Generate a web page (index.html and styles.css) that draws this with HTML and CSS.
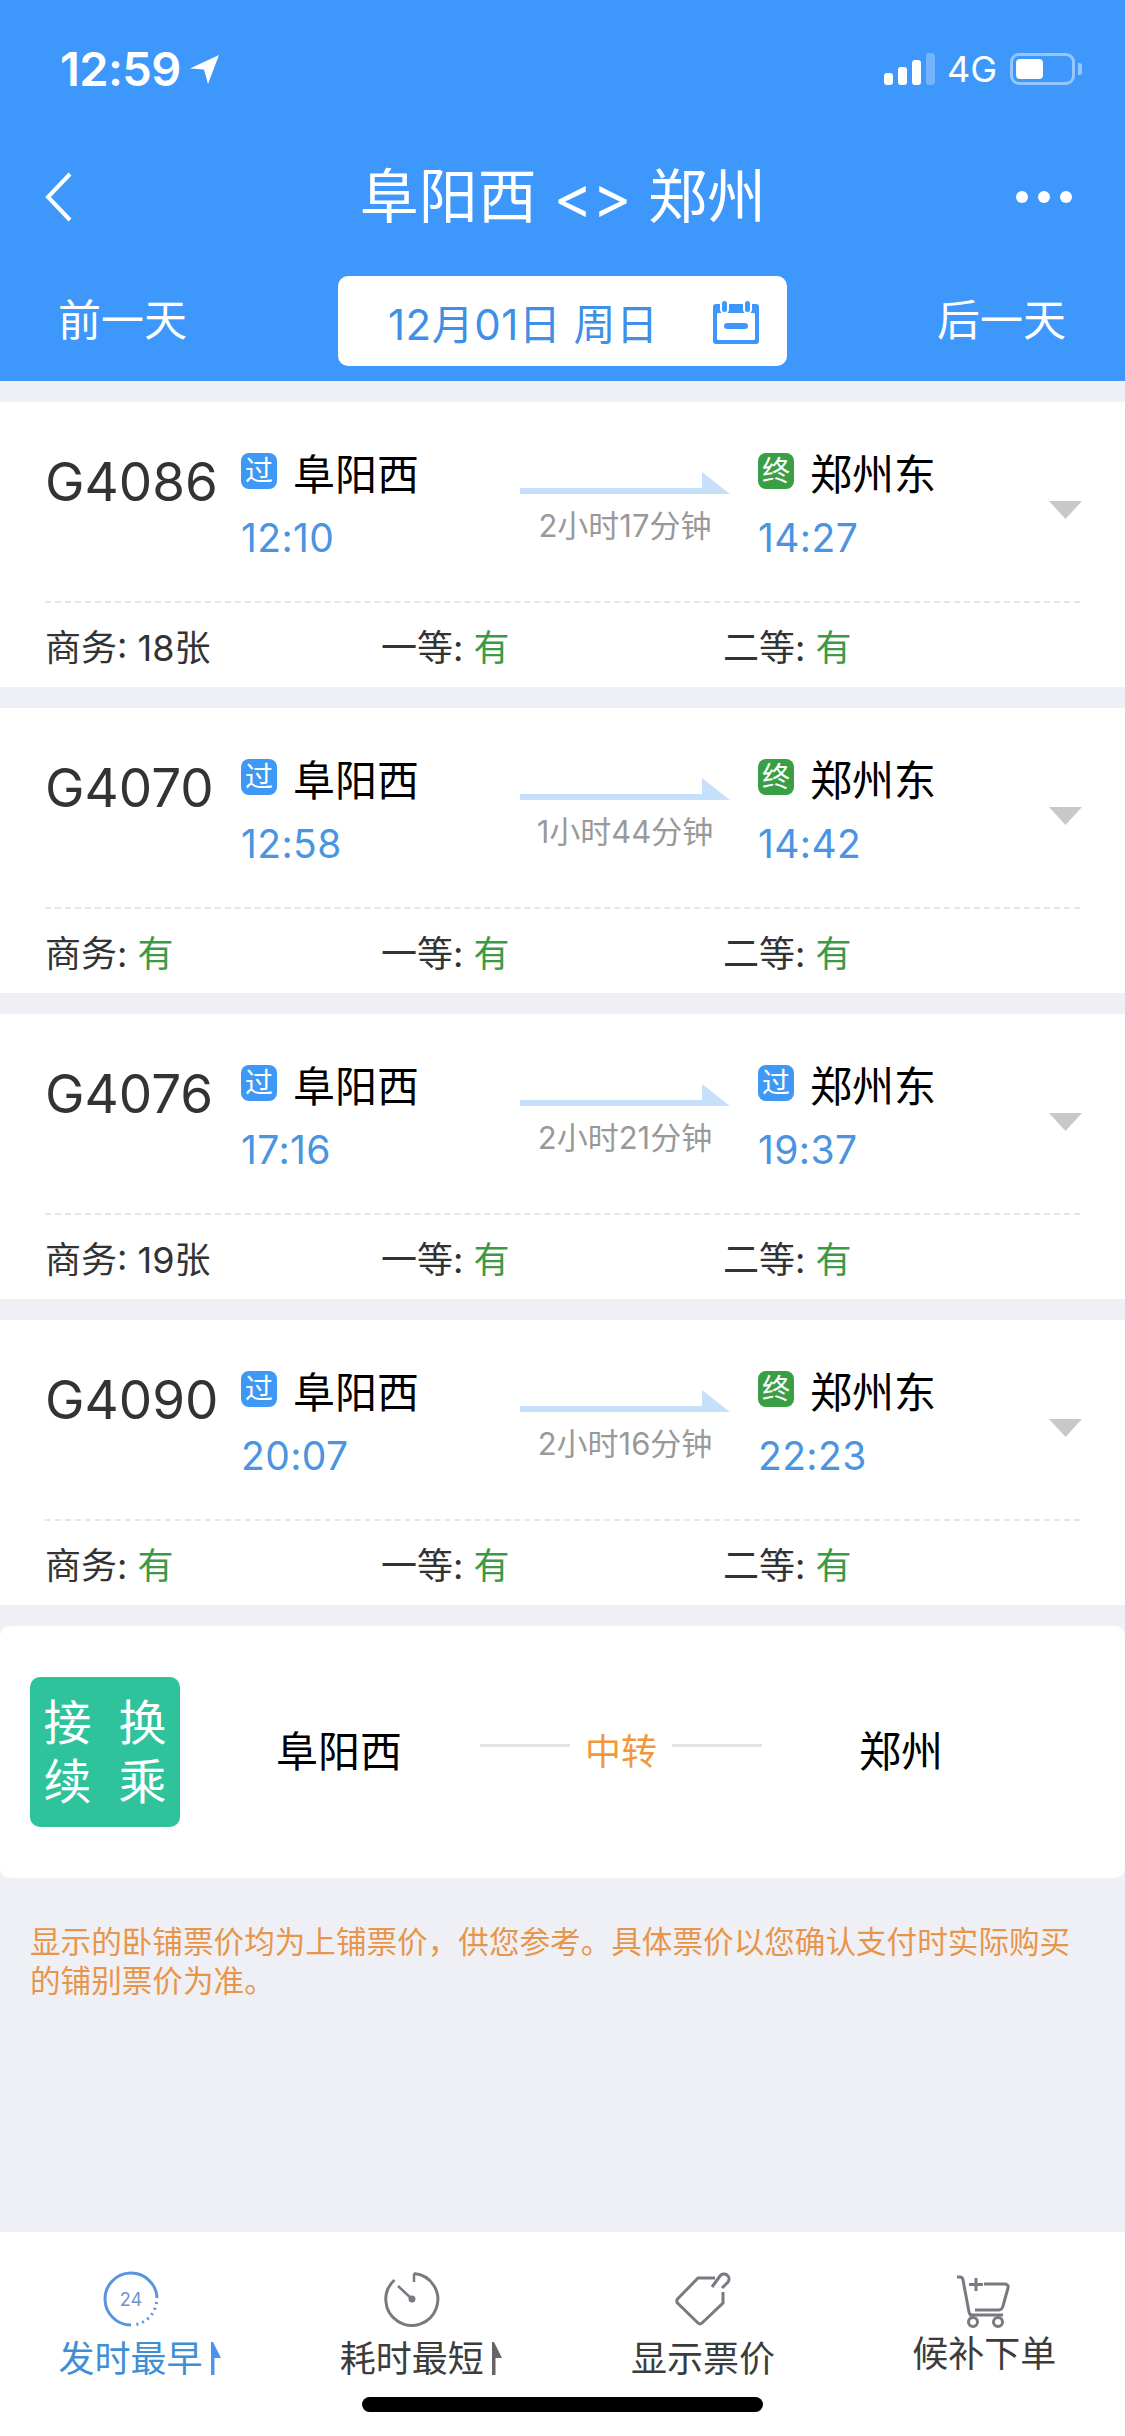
FILE: index.html
```html
<!DOCTYPE html>
<html lang="zh-CN">
<head>
<meta charset="utf-8">
<title>阜阳西 - 郑州</title>
<link rel="stylesheet" href="styles.css">
</head>
<body>
<div class="app">
  <header class="header">
    <div class="status">
      <div class="status-left">
        <span class="clock">12:59</span>
        <svg class="loc" viewBox="0 0 30 29"><path d="M29 0 0 13.500 14 14.500 18 29Z"/></svg>
      </div>
      <div class="status-right">
        <div class="signal"><i class="b1"></i><i class="b2"></i><i class="b3"></i><i class="b4"></i></div>
        <span class="net">4G</span>
        <div class="battery"><div class="battery-fill"></div></div>
        <div class="battery-nub"></div>
      </div>
    </div>
    <nav class="nav">
      <svg class="back" viewBox="0 0 30 52"><path d="M26 3 4 26l22 23"/></svg>
      <h1 class="title">阜阳西 &lt;&gt; 郑州</h1>
      <div class="dots"><i></i><i></i><i></i></div>
    </nav>
    <div class="dates">
      <span class="day-btn">前一天</span>
      <div class="date-pill">
        <span class="date-text">12月01日 周日</span>
        <svg class="cal" viewBox="0 0 46 45"><path class="cal-body" d="M3 5h40a3 3 0 0 1 3 3v34a3 3 0 0 1-3 3H3a3 3 0 0 1-3-3V8a3 3 0 0 1 3-3Z"/><rect class="cal-in" x="4" y="14" width="38" height="27" rx="1"/><rect class="cal-body" x="11" y="24" width="24" height="6" rx="3"/><rect class="cal-ring" x="8" y="1" width="7" height="13" rx="3.500"/><rect class="cal-ring" x="31" y="1" width="7" height="13" rx="3.500"/></svg>
      </div>
      <span class="day-btn">后一天</span>
    </div>
  </header>

  <main class="list">
    <section class="card">
      <div class="trip">
        <div class="train">G4086</div>
        <div class="stop stop-from">
          <div class="stop-name"><span class="tag tag-pass">过</span>阜阳西</div>
          <div class="time">12:10</div>
        </div>
        <div class="span">
          <svg class="arrow" viewBox="0 0 210 22"><path d="M0 16h182V0l28 22H0Z"/></svg>
          <div class="dur">2小时17分钟</div>
        </div>
        <div class="stop stop-to">
          <div class="stop-name"><span class="tag tag-end">终</span>郑州东</div>
          <div class="time">14:27</div>
        </div>
        <svg class="chev" viewBox="0 0 33 18"><path d="M0 0h33L16.500 18Z"/></svg>
      </div>
      <div class="seats">
        <div class="seat seat-a">商务: 18张</div>
        <div class="seat seat-b">一等: <em>有</em></div>
        <div class="seat seat-c">二等: <em>有</em></div>
      </div>
    </section>

    <section class="card">
      <div class="trip">
        <div class="train">G4070</div>
        <div class="stop stop-from">
          <div class="stop-name"><span class="tag tag-pass">过</span>阜阳西</div>
          <div class="time">12:58</div>
        </div>
        <div class="span">
          <svg class="arrow" viewBox="0 0 210 22"><path d="M0 16h182V0l28 22H0Z"/></svg>
          <div class="dur">1小时44分钟</div>
        </div>
        <div class="stop stop-to">
          <div class="stop-name"><span class="tag tag-end">终</span>郑州东</div>
          <div class="time">14:42</div>
        </div>
        <svg class="chev" viewBox="0 0 33 18"><path d="M0 0h33L16.500 18Z"/></svg>
      </div>
      <div class="seats">
        <div class="seat seat-a">商务: <em>有</em></div>
        <div class="seat seat-b">一等: <em>有</em></div>
        <div class="seat seat-c">二等: <em>有</em></div>
      </div>
    </section>

    <section class="card">
      <div class="trip">
        <div class="train">G4076</div>
        <div class="stop stop-from">
          <div class="stop-name"><span class="tag tag-pass">过</span>阜阳西</div>
          <div class="time">17:16</div>
        </div>
        <div class="span">
          <svg class="arrow" viewBox="0 0 210 22"><path d="M0 16h182V0l28 22H0Z"/></svg>
          <div class="dur">2小时21分钟</div>
        </div>
        <div class="stop stop-to">
          <div class="stop-name"><span class="tag tag-pass">过</span>郑州东</div>
          <div class="time">19:37</div>
        </div>
        <svg class="chev" viewBox="0 0 33 18"><path d="M0 0h33L16.500 18Z"/></svg>
      </div>
      <div class="seats">
        <div class="seat seat-a">商务: 19张</div>
        <div class="seat seat-b">一等: <em>有</em></div>
        <div class="seat seat-c">二等: <em>有</em></div>
      </div>
    </section>

    <section class="card">
      <div class="trip">
        <div class="train">G4090</div>
        <div class="stop stop-from">
          <div class="stop-name"><span class="tag tag-pass">过</span>阜阳西</div>
          <div class="time">20:07</div>
        </div>
        <div class="span">
          <svg class="arrow" viewBox="0 0 210 22"><path d="M0 16h182V0l28 22H0Z"/></svg>
          <div class="dur">2小时16分钟</div>
        </div>
        <div class="stop stop-to">
          <div class="stop-name"><span class="tag tag-end">终</span>郑州东</div>
          <div class="time">22:23</div>
        </div>
        <svg class="chev" viewBox="0 0 33 18"><path d="M0 0h33L16.500 18Z"/></svg>
      </div>
      <div class="seats">
        <div class="seat seat-a">商务: <em>有</em></div>
        <div class="seat seat-b">一等: <em>有</em></div>
        <div class="seat seat-c">二等: <em>有</em></div>
      </div>
    </section>

    <section class="transfer">
      <div class="badge"><span>接</span><span>换</span><span>续</span><span>乘</span></div>
      <div class="tr-from">阜阳西</div>
      <div class="tr-mid"><i></i><span>中转</span><i></i></div>
      <div class="tr-to">郑州</div>
    </section>

    <p class="note">显示的卧铺票价均为上铺票价，供您参考。具体票价以您确认支付时实际购买的铺别票价为准。</p>
  </main>

  <footer class="tabs">
    <div class="tab tab-sort tab-active">
      <svg class="tab-icon" viewBox="0 0 54 54"><path class="ic-blue" d="M53 26A26 26 0 1 0 27 53"/><path class="ic-dot" d="M52.500 30A26 26 0 0 1 31 52.800"/><text class="ic-num" x="27" y="33.500" text-anchor="middle">24</text></svg>
      <div class="tab-label">发时最早<svg class="sort" viewBox="0 0 10 33"><path d="M0 0h2l8 16H3.500v17H0Z"/></svg></div>
    </div>
    <div class="tab tab-sort">
      <svg class="tab-icon" viewBox="0 0 54 54"><path class="ic-grey" d="M29 1.500A26 26 0 1 1 9.500 8"/><path class="ic-grey ic-thin" d="M29 1.500V10M13 14l14 13"/><circle class="ic-fill" cx="27" cy="27" r="3.500"/></svg>
      <div class="tab-label">耗时最短<svg class="sort sort-grey" viewBox="0 0 10 33"><path d="M0 0h2l8 16H3.500v17H0Z"/></svg></div>
    </div>
    <div class="tab">
      <svg class="tab-icon" viewBox="0 0 54 54"><path class="ic-grey" d="M39 6H22L1.500 27q-1.500 2 0 4L22 51q2 2 4 0l21-20V20"/><path class="ic-grey" d="M36 15l8-11a5 5 0 0 1 8 6l-6 6"/></svg>
      <div class="tab-label">显示票价</div>
    </div>
    <div class="tab tab-cart">
      <svg class="tab-icon" viewBox="0 0 54 54"><path class="ic-grey" d="M0 2h3q2.500 0 3 3l6 32q.5 3 3 3"/><path class="ic-grey" d="M27 9h20q5 0 4 4l-5 18q-1 4-4 4H18"/><path class="ic-grey" d="M19 3v13M12 9.500h14M12 40h34"/><circle class="ic-grey" cx="16" cy="47" r="4.500"/><circle class="ic-grey" cx="41" cy="47" r="4.500"/></svg>
      <div class="tab-label">候补下单</div>
    </div>
    <div class="home"></div>
  </footer>
</div>
</body>
</html>
```
FILE: styles.css
```css
* { box-sizing: border-box; }
html, body { margin: 0; padding: 0; }
body {
  width: 1125px;
  height: 2436px;
  overflow: hidden;
  background: #eff0f6;
  font-family: "Inter", "Noto Sans CJK SC", sans-serif;
}
.app { display: flex; flex-direction: column; height: 2436px; }

/* Header */
.header { background: #3e98fb; height: 381px; flex: none; color: #fff; }
.status { height: 138px; padding: 53px 43px 0 60px; display: flex; justify-content: space-between; }
.status-left { display: flex; align-items: flex-start; }
.clock { font-size: 47px; line-height: 32px; font-weight: 600; letter-spacing: -.6px; width: 130px; }
.loc { width: 30px; height: 29px; margin-top: 2px; fill: #fff; }
.status-right { display: flex; align-items: flex-start; }
.signal { display: flex; align-items: flex-end; gap: 5px; height: 32px; width: 51px; }
.signal i { display: block; width: 9px; background: #fff; border-radius: 3px; }
.b1 { height: 12px; }
.b2 { height: 18px; }
.b3 { height: 25px; }
.signal .b4 { height: 32px; background: rgba(255, 255, 255, .28); }
.net { font-size: 36px; line-height: 32px; margin-left: 12px; width: 63px; }
.battery { width: 65px; height: 32px; border: 3px solid rgba(255, 255, 255, .45); border-radius: 9px; padding: 3px; }
.battery-fill { width: 27px; height: 100%; background: #fff; border-radius: 4px; }
.battery-nub { width: 4px; height: 12px; margin: 10px 0 0 3px; background: rgba(255, 255, 255, .45); border-radius: 0 3px 3px 0; }

.nav { height: 118px; padding: 0 53px 0 44px; display: flex; align-items: center; justify-content: space-between; }
.back { width: 30px; height: 52px; fill: none; stroke: #fff; stroke-width: 4px; }
.title { margin: 0 0 0 36px; font-size: 59px; font-weight: 400; line-height: 80px; }
.dots { display: flex; gap: 10px; }
.dots i { display: block; width: 12px; height: 12px; background: #fff; border-radius: 50%; }

.dates { height: 90px; margin-top: 20px; display: flex; align-items: center; padding-left: 58px; }
.day-btn { font-size: 43px; line-height: 56px; width: 126px; flex: none; white-space: nowrap; margin-top: -3px; }
.date-pill { width: 449px; height: 90px; margin: 0 150px 0 154px; flex: none; background: #fff; border-radius: 10px; display: flex; align-items: center; padding-left: 50px; }
.date-text { font-size: 42px; color: #3f8fe6; width: 325px; white-space: nowrap; letter-spacing: .5px; }
.cal { width: 46px; height: 45px; }
.cal-body { fill: #3e98fb; }
.cal-in { fill: #fff; }
.cal-ring { fill: #3e98fb; stroke: #fff; stroke-width: 2px; }

/* List */
.list { flex: 1; padding-top: 21px; display: flex; flex-direction: column; }
.card { background: #fff; height: 285px; margin-bottom: 21px; flex: none; }
.trip { height: 201px; border-bottom: 2px dashed #e6e6e6; margin: 0 45px 0 45px; display: flex; position: relative; }
.train { width: 196px; font-size: 53px; line-height: 64px; padding-top: 48px; color: #333; flex: none; }
.stop { width: 279px; flex: none; }
.stop-to { width: auto; }
.stop-name { display: flex; align-items: center; font-size: 42px; height: 36px; margin-top: 51px; color: #000; white-space: nowrap; }
.tag { width: 36px; height: 36px; border-radius: 8px; color: #fff; font-size: 28px; line-height: 36px; text-align: center; margin-right: 16px; flex: none; }
.tag-pass { background: #3e98f5; }
.tag-end { background: #3a9e45; }
.time { font-size: 39px; line-height: 44px; margin-top: 27px; color: #4a94e2; letter-spacing: .4px; }
.span { width: 238px; flex: none; padding-top: 70px; }
.arrow { display: block; width: 210px; height: 22px; fill: #c6e0fb; }
.dur { font-size: 31px; line-height: 40px; color: #999; width: 210px; text-align: center; margin-top: 12px; white-space: nowrap; }
.chev { position: absolute; right: -2px; top: 99px; width: 33px; height: 18px; fill: #c8c8c8; }

.seats { height: 84px; margin: 0 45px; display: flex; align-items: center; font-size: 36px; color: #333; }
.seat { white-space: nowrap; }
.seat em { font-style: normal; color: #3a9a47; }
.seat-a { width: 336px; }
.seat-b { width: 342px; }

/* Transfer */
.transfer { background: #fff; border-radius: 10px; height: 252px; display: flex; align-items: center; padding-left: 30px; flex: none; }
.badge { width: 150px; height: 150px; background: #2fc39c; border-radius: 10px; color: #fff; font-size: 48px; line-height: 59px; display: grid; grid-template-columns: 1fr 1fr; text-align: center; padding: 16px 0; flex: none; }
.tr-from { font-size: 42px; line-height: 56px; color: #000; margin: 0 0 0 96px; width: 204px; white-space: nowrap; }
.tr-mid { display: flex; align-items: center; gap: 15px; width: 282px; color: #f2983a; font-size: 36px; line-height: 48px; flex: none; }
.tr-mid i { display: block; width: 90px; height: 3px; background: #e4e4e4; flex: none; margin-top: -13px; }
.tr-mid span { white-space: nowrap; flex: none; }
.tr-to { font-size: 42px; line-height: 56px; color: #000; margin: 0 0 0 97px; white-space: nowrap; }

.note { margin: 44px 30px 0; font-size: 30.600px; line-height: 39px; color: #e8954a; }

/* Tabs */
.tabs { height: 204px; background: #fff; flex: none; display: grid; grid-template-columns: repeat(4, 1fr); position: relative; }
.tab { display: flex; flex-direction: column; align-items: center; padding-top: 40px; }
.tab-sort { padding-right: 20px; }
.tab-icon { width: 54px; height: 54px; fill: none; overflow: visible; }
.tab-label { position: relative; font-size: 36px; line-height: 44px; margin-top: 11px; color: #3c3c3c; white-space: nowrap; }
.tab-active .tab-label { color: #3f8fd6; }
.tab-cart .tab-icon { margin-top: 3px; }
.tab-cart .tab-label { margin-top: 3px; }
.sort { position: absolute; left: 152px; top: 5px; width: 10px; height: 33px; fill: #4a94f0; }
.sort-grey { fill: #666; }
.ic-blue { stroke: #5a93e0; stroke-width: 3px; }
.ic-dot { stroke: #5a93e0; stroke-width: 3px; stroke-dasharray: 2 4; }
.ic-num { fill: #6a94cf; stroke: none; font-size: 18px; font-family: "Inter", sans-serif; }
.ic-grey { stroke: #777a80; stroke-width: 3px; fill: none; }
.ic-thin { stroke-width: 2.500px; }
.ic-fill { fill: #777a80; }
.home { position: absolute; left: 362px; top: 165px; width: 401px; height: 15px; background: #000; border-radius: 8px; }
```
